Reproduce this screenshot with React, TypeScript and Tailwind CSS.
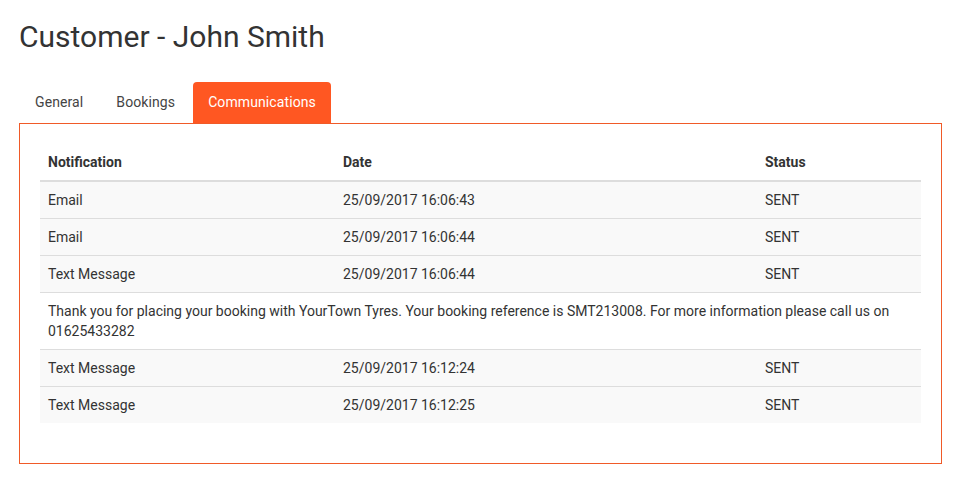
import React from "react";

interface Communication {
  notification: string;
  date: string;
  status: string;
  message?: string;
}

const communications: Communication[] = [
  { notification: "Email", date: "25/09/2017 16:06:43", status: "SENT" },
  { notification: "Email", date: "25/09/2017 16:06:44", status: "SENT" },
  {
    notification: "Text Message",
    date: "25/09/2017 16:06:44",
    status: "SENT",
    message:
      "Thank you for placing your booking with YourTown Tyres. Your booking reference is SMT213008. For more information please call us on 01625433282",
  },
  { notification: "Text Message", date: "25/09/2017 16:12:24", status: "SENT" },
  { notification: "Text Message", date: "25/09/2017 16:12:25", status: "SENT" },
];

const tabs = ["General", "Bookings", "Communications"];

export default function App() {
  const active = "Communications";

  return (
    <div
      className="min-h-[480px] bg-white px-[19px] text-[14px] leading-[20px] text-[#333]"
      style={{ fontFamily: "Roboto, 'Liberation Sans', sans-serif" }}
    >
      <h1 className="pt-[20px] text-[30px] leading-[33px] font-normal text-[#333]">
        Customer - John Smith
      </h1>

      <div className="mt-[29px] ml-[1px] flex gap-[3px]">
        {tabs.map((tab) => (
          <div
            key={tab}
            className={
              tab === active
                ? "h-[41px] rounded-t-[4px] bg-[#ff5722] px-[15px] pt-[10px] tracking-[0.1px] text-white"
                : "h-[41px] px-[15px] pt-[10px] tracking-[0.1px] text-[#444]"
            }
          >
            {tab}
          </div>
        ))}
      </div>

      <div className="w-[923px] border border-[#f05a28] px-[20px] pt-[20px] pb-[40px]">
        <table className="w-[881px] table-fixed border-collapse text-left">
          <colgroup>
            <col className="w-[295px]" />
            <col className="w-[422px]" />
            <col className="w-[164px]" />
          </colgroup>
          <thead>
            <tr className="border-b-2 border-[#ddd]">
              <th className="p-[8px] font-bold">Notification</th>
              <th className="p-[8px] font-bold">Date</th>
              <th className="p-[8px] font-bold">Status</th>
            </tr>
          </thead>
          <tbody>
            {communications.map((c, i) => (
              <React.Fragment key={i}>
                <tr className="border-t border-[#ddd] bg-[#f9f9f9] first:border-t-0">
                  <td className="p-[8px]">{c.notification}</td>
                  <td className="p-[8px]">{c.date}</td>
                  <td className="p-[8px]">{c.status}</td>
                </tr>
                {c.message && (
                  <tr className="border-t border-[#ddd] bg-white">
                    <td colSpan={3} className="p-[8px]">
                      {c.message}
                    </td>
                  </tr>
                )}
              </React.Fragment>
            ))}
          </tbody>
        </table>
      </div>
    </div>
  );
}
